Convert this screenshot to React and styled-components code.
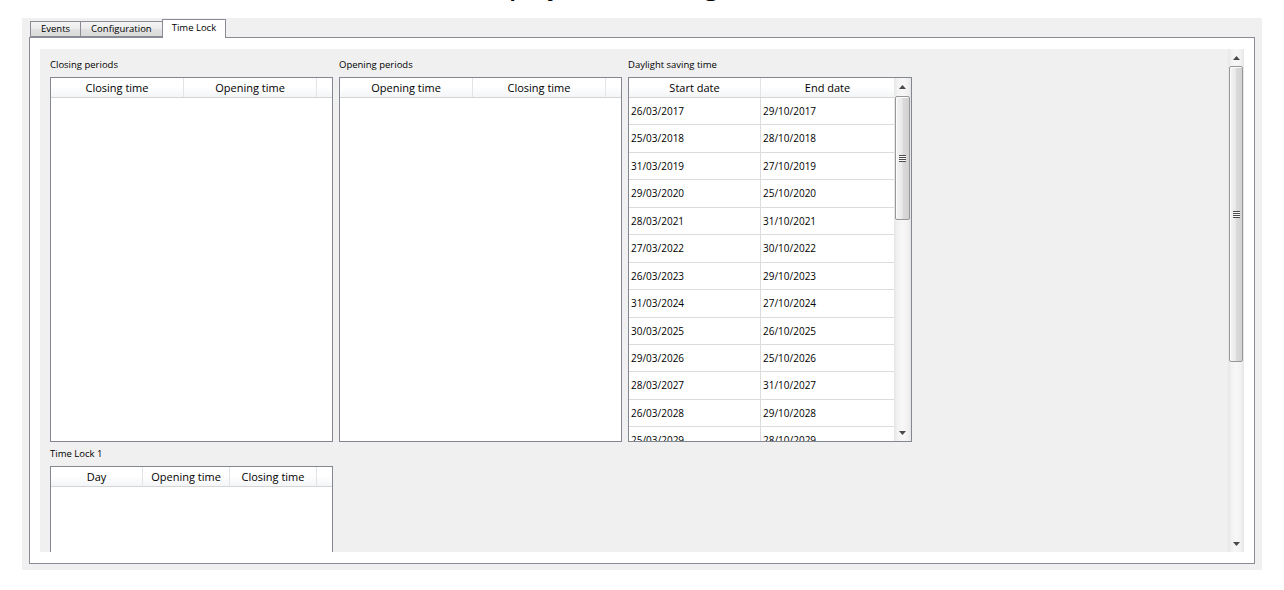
import React from 'react'
import styled, { createGlobalStyle } from 'styled-components'

const GlobalStyle = createGlobalStyle`
  html, body {
    margin: 0;
    padding: 0;
    background: #fff;
  }
  body {
    font-family: "Open Sans", "Noto Sans", sans-serif;
    color: #000;
  }
`

const Page = styled.div`
  width: 1284px;
  height: 590px;
  overflow: hidden;
  background: #fff;
`

// only the descenders of the page title are visible above the window
const Heading = styled.div`
  height: 18px;
  overflow: hidden;
  padding-left: 470px;
  h1 {
    margin: -34px 0 0;
    font-size: 26px;
    font-weight: 600;
    line-height: 38px;
    white-space: nowrap;
  }
`

const Window = styled.div`
  margin: 0 22px;
  height: 552px;
  box-sizing: border-box;
  padding: 1px 7px 6px;
  background: #f0f0f0;
`

const TabBar = styled.div`
  display: flex;
  align-items: flex-end;
  height: 18px;
  padding-left: 1px;
`

const Tab = styled.div`
  position: relative;
  z-index: ${p => (p.$active ? 2 : 1)};
  height: ${p => (p.$active ? '19px' : '16px')};
  margin-bottom: ${p => (p.$active ? '-1px' : '0')};
  margin-left: -1px;
  padding: 0 ${p => (p.$active ? '9px' : '10px')};
  box-sizing: border-box;
  border: 1px solid #898c95;
  border-bottom: ${p => (p.$active ? 'none' : '1px solid #898c95')};
  background: ${p => (p.$active ? '#fff' : 'linear-gradient(#f4f4f4, #ececec 50%, #e2e2e2 50%, #dadada)')};
  font-size: 9.5px;
  line-height: ${p => (p.$active ? '16px' : '14px')};
  white-space: nowrap;
  &:first-child {
    margin-left: 0;
  }
`

const Pane = styled.div`
  height: 527px;
  box-sizing: border-box;
  padding: 11px 10px;
  border: 1px solid #898c95;
  background: #fff;
`

const ScrollArea = styled.div`
  display: flex;
  height: 503px;
  background: #f0f0f0;
`

const Content = styled.div`
  flex: 1;
  overflow: hidden;
  padding: 9px 0 0 10px;
`

const Grid = styled.div`
  display: grid;
  grid-template-columns: 283px 283px 284px;
  column-gap: 6px;
  row-gap: 5px;
  align-items: start;
`

const Group = styled.div`
  display: flex;
  flex-direction: column;
`

const Label = styled.div`
  height: 14px;
  margin-bottom: 5px;
  font-size: 9.5px;
  line-height: 14px;
`

const Table = styled.div`
  display: flex;
  height: ${p => p.$height}px;
  box-sizing: border-box;
  border: 1px solid #828790;
  background: #fff;
`

const TableMain = styled.div`
  flex: 1;
  display: flex;
  flex-direction: column;
  min-width: 0;
  overflow: hidden;
`

const HeaderRow = styled.div`
  display: flex;
  flex: none;
  height: 20px;
  box-sizing: border-box;
  border-bottom: 1px solid #d5d5d5;
  background: linear-gradient(#ffffff, #ffffff 45%, #f4f5f7);
`

const HeaderCell = styled.div`
  flex: ${p => (p.$width ? `0 0 ${p.$width}px` : '1')};
  box-sizing: border-box;
  border-right: 1px solid #e3e4e6;
  font-size: 11px;
  line-height: 19px;
  text-align: center;
  white-space: nowrap;
  &:last-child {
    border-right: none;
  }
`

const Body = styled.div`
  flex: 1;
  overflow: hidden;
`

const Row = styled.div`
  display: flex;
  height: 27.45px;
  box-sizing: border-box;
  border-bottom: 1px solid #dcdcdc;
`

const Cell = styled.div`
  flex: ${p => (p.$width ? `0 0 ${p.$width}px` : '1')};
  box-sizing: border-box;
  padding-left: 2px;
  border-right: 1px solid #dcdcdc;
  font-size: 10px;
  line-height: 27px;
  white-space: nowrap;
  &:last-child {
    border-right: none;
  }
`

const ScrollBar = styled.div`
  flex: none;
  display: flex;
  flex-direction: column;
  width: ${p => p.$width}px;
  background: linear-gradient(to right, #e6e6e6, #f2f2f2 20%, #f7f7f7 50%, #f2f2f2 80%, #e6e6e6);
`

const ArrowButton = styled.div`
  flex: none;
  display: flex;
  align-items: center;
  justify-content: center;
  height: 17px;
  svg {
    width: 7px;
    height: 4px;
    fill: #4a4a4a;
  }
`

const Track = styled.div`
  flex: 1;
  display: flex;
  flex-direction: column;
  padding: 0 1px;
`

const Thumb = styled.div`
  flex: none;
  display: flex;
  align-items: center;
  justify-content: center;
  height: ${p => p.$size}px;
  margin-top: ${p => p.$offset}px;
  box-sizing: border-box;
  border: 1px solid #979797;
  border-radius: 2px;
  background: linear-gradient(to right, #f4f4f4, #e9e9e9 45%, #dadada 55%, #d2d2d2);
  box-shadow: inset 1px 1px 0 #fcfcfc;
`

const Grip = styled.div`
  width: 7px;
  height: 7px;
  background: repeating-linear-gradient(#4d4d4d 0 1px, #fafafa 1px 2px);
`

const ArrowUp = () => (
  <svg viewBox="0 0 7 4">
    <polygon points="3.5,0 7,4 0,4" />
  </svg>
)

const ArrowDown = () => (
  <svg viewBox="0 0 7 4">
    <polygon points="0,0 7,0 3.5,4" />
  </svg>
)

function VScroll({ width, thumbOffset, thumbSize }) {
  return (
    <ScrollBar $width={width}>
      <ArrowButton>
        <ArrowUp />
      </ArrowButton>
      <Track>
        <Thumb $offset={thumbOffset} $size={thumbSize}>
          <Grip />
        </Thumb>
      </Track>
      <ArrowButton>
        <ArrowDown />
      </ArrowButton>
    </ScrollBar>
  )
}

function GridTable({ height, columns, rows = [], scroll }) {
  return (
    <Table $height={height}>
      <TableMain>
        <HeaderRow>
          {columns.map(col => (
            <HeaderCell key={col.title} $width={col.width}>
              {col.title}
            </HeaderCell>
          ))}
          {!scroll && <HeaderCell />}
        </HeaderRow>
        <Body>
          {rows.map(row => (
            <Row key={row[0]}>
              {row.map((value, i) => (
                <Cell key={i} $width={columns[i].width}>
                  {value}
                </Cell>
              ))}
            </Row>
          ))}
        </Body>
      </TableMain>
      {scroll && <VScroll width={17} thumbOffset={1} thumbSize={124} />}
    </Table>
  )
}

const dstRows = [
  ['26/03/2017', '29/10/2017'],
  ['25/03/2018', '28/10/2018'],
  ['31/03/2019', '27/10/2019'],
  ['29/03/2020', '25/10/2020'],
  ['28/03/2021', '31/10/2021'],
  ['27/03/2022', '30/10/2022'],
  ['26/03/2023', '29/10/2023'],
  ['31/03/2024', '27/10/2024'],
  ['30/03/2025', '26/10/2025'],
  ['29/03/2026', '25/10/2026'],
  ['28/03/2027', '31/10/2027'],
  ['26/03/2028', '29/10/2028'],
  ['25/03/2029', '28/10/2029'],
]

export default function App() {
  return (
    <Page>
      <GlobalStyle />
      <Heading>
        <h1>Display time settings</h1>
      </Heading>
      <Window>
        <TabBar>
          <Tab>Events</Tab>
          <Tab>Configuration</Tab>
          <Tab $active>Time Lock</Tab>
        </TabBar>
        <Pane>
          <ScrollArea>
            <Content>
              <Grid>
                <Group>
                  <Label>Closing periods</Label>
                  <GridTable
                    height={365}
                    columns={[
                      { title: 'Closing time', width: 133 },
                      { title: 'Opening time', width: 133 },
                    ]}
                  />
                </Group>
                <Group>
                  <Label>Opening periods</Label>
                  <GridTable
                    height={365}
                    columns={[
                      { title: 'Opening time', width: 133 },
                      { title: 'Closing time', width: 133 },
                    ]}
                  />
                </Group>
                <Group>
                  <Label>Daylight saving time</Label>
                  <GridTable
                    height={365}
                    scroll
                    columns={[
                      { title: 'Start date', width: 132 },
                      { title: 'End date' },
                    ]}
                    rows={dstRows}
                  />
                </Group>
                <Group>
                  <Label>Time Lock 1</Label>
                  <GridTable
                    height={160}
                    columns={[
                      { title: 'Day', width: 92 },
                      { title: 'Opening time', width: 87 },
                      { title: 'Closing time', width: 87 },
                    ]}
                  />
                </Group>
              </Grid>
            </Content>
            <VScroll width={16} thumbOffset={0} thumbSize={296} />
          </ScrollArea>
        </Pane>
      </Window>
    </Page>
  )
}
